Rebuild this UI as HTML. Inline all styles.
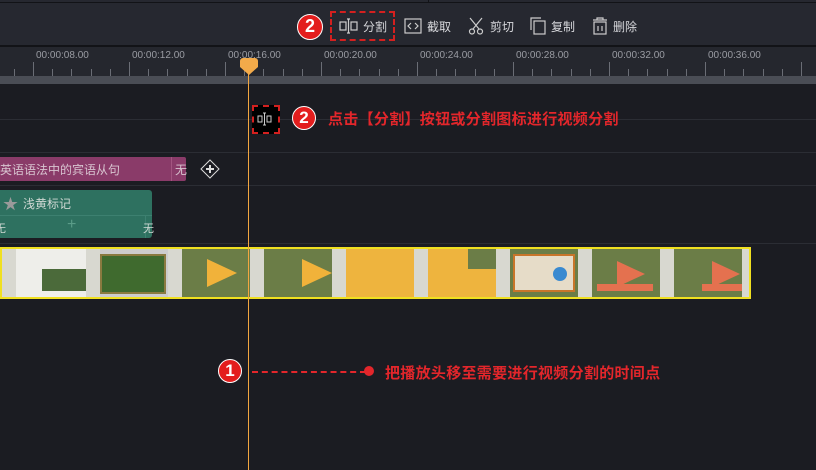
<!DOCTYPE html>
<html><head><meta charset="utf-8"><style>
*{margin:0;padding:0;box-sizing:border-box}
body{width:816px;height:470px;background:#1b1c22;overflow:hidden;position:relative;font-family:"Liberation Sans","Noto Sans CJK SC",sans-serif}
.a{position:absolute}
.lbl{font-size:10px;color:#9a9ca3;top:50px}
.tk{position:absolute;width:1px;background:#6a6d75}
.red{color:#e3262b;font-weight:bold;font-size:15px;letter-spacing:0.3px}
.circ{border-radius:50%;background:#e31d1d;border:1.5px solid #fff;color:#fff;font-weight:bold;text-align:center}
.tb{color:#d6d7db;font-size:12px;top:18px}
</style></head><body>
<div class="a" style="left:0;top:0;width:816px;height:46px;background:#262830"></div>
<div class="a" style="left:0;top:2px;width:816px;height:1px;background:#121317"></div>
<div class="a" style="left:428px;top:0;width:1px;height:3px;background:#121317"></div>
<div class="a" style="left:0;top:45px;width:816px;height:2px;background:#121317"></div>
<div class="a circ" style="left:297px;top:14px;width:26px;height:26px;font-size:18px;line-height:23px">2</div>
<div class="a" style="left:330px;top:11px;width:65px;height:30px;border:2px dashed #d4201f"></div>
<svg class="a" style="left:339px;top:18px" width="20" height="16" viewBox="0 0 20 16" fill="none" stroke="#ccc" stroke-width="1.2"><rect x="1" y="4" width="6" height="8"/><rect x="12" y="4" width="6" height="8"/><path d="M9.5 1v14M8 1h3M8 15h3"/></svg>
<div class="a tb" style="left:363px">分割</div>
<svg class="a" style="left:404px;top:18px" width="18" height="16" viewBox="0 0 18 16" fill="none" stroke="#ccc" stroke-width="1.2"><rect x="1" y="1" width="16" height="14"/><path d="M7 5l-3 3 3 3M11 5l3 3-3 3"/></svg>
<div class="a tb" style="left:427px">截取</div>
<svg class="a" style="left:468px;top:17px" width="16" height="18" viewBox="0 0 16 18" fill="none" stroke="#ccc" stroke-width="1.2"><path d="M2 1l9 11M14 1L5 12"/><circle cx="4" cy="14.5" r="2.5"/><circle cx="12" cy="14.5" r="2.5"/></svg>
<div class="a tb" style="left:490px">剪切</div>
<svg class="a" style="left:530px;top:17px" width="16" height="18" viewBox="0 0 16 18" fill="none" stroke="#ccc" stroke-width="1.2"><path d="M1 13V1h10"/><rect x="4" y="4" width="11" height="13"/></svg>
<div class="a tb" style="left:551px">复制</div>
<svg class="a" style="left:592px;top:17px" width="16" height="18" viewBox="0 0 16 18" fill="none" stroke="#ccc" stroke-width="1.2"><path d="M1 3h14M5 3V1h6v2"/><rect x="2" y="5" width="12" height="12"/><path d="M6 9v5M10 9v5"/></svg>
<div class="a tb" style="left:613px">删除</div>
<div class="a" style="left:0;top:47px;width:816px;height:29px;background:#25272e"></div>
<div class="a" style="left:0;top:76px;width:816px;height:8px;background:#4a4d55"></div>
<div class="a lbl" style="left:36px">00:00:08.00</div>
<div class="a lbl" style="left:132px">00:00:12.00</div>
<div class="a lbl" style="left:228px">00:00:16.00</div>
<div class="a lbl" style="left:324px">00:00:20.00</div>
<div class="a lbl" style="left:420px">00:00:24.00</div>
<div class="a lbl" style="left:516px">00:00:28.00</div>
<div class="a lbl" style="left:612px">00:00:32.00</div>
<div class="a lbl" style="left:708px">00:00:36.00</div>
<div id="ticks"></div>
<script>
var h='';for(var i=-1;i<45;i++){var x=33+i*19.2;if(x<0||x>816)continue;var m=(i%5==0);h+='<div class="tk" style="left:'+Math.round(x)+'px;top:'+(m?62:69)+'px;height:'+(m?14:7)+'px"></div>';}
document.getElementById('ticks').innerHTML=h;
</script>
<div class="a" style="left:0;top:119px;width:816px;height:1px;background:#2b2d34"></div>
<div class="a" style="left:0;top:152px;width:816px;height:1px;background:#2b2d34"></div>
<div class="a" style="left:0;top:185px;width:816px;height:1px;background:#2b2d34"></div>
<div class="a" style="left:0;top:243px;width:816px;height:1px;background:#2b2d34"></div>
<div class="a" style="left:0;top:157px;width:186px;height:24px;background:#8a3b69;border-radius:0 2px 2px 0"></div>
<div class="a" style="left:171px;top:157px;width:1px;height:24px;background:#a35580"></div>
<div class="a" style="left:0;top:161px;font-size:12px;color:#d8c4d0">英语语法中的宾语从句</div>
<div class="a" style="left:175px;top:161px;font-size:12px;color:#d8c4d0">无</div>
<svg class="a" style="left:200px;top:159px" width="20" height="20" viewBox="0 0 20 20" fill="none" stroke="#ddd" stroke-width="1"><path d="M10 1l9 9-9 9-9-9z"/><path d="M10 6v8M6 10h8" stroke-width="2"/></svg>
<div class="a" style="left:0;top:190px;width:152px;height:48px;background:#2e7160;border-radius:0 3px 3px 0"></div>
<div class="a" style="left:0;top:215px;width:152px;height:1px;background:#3d8070"></div>
<div class="a" style="left:145px;top:215px;width:1px;height:23px;background:#3d8070"></div>
<div class="a" style="left:3px;top:193px;font-size:15px;color:#9a9a9a">★</div>
<div class="a" style="left:23px;top:195px;font-size:12px;color:#cfd8d3">浅黄标记</div>
<div class="a" style="left:0;top:220px;font-size:11px;color:#cfd8d3;width:6px;overflow:hidden;direction:rtl">无</div>
<div class="a" style="left:67px;top:216px;font-size:16px;color:#5a9c88">+</div>
<div class="a" style="left:143px;top:220px;font-size:11px;color:#cfd8d3">无</div>
<div class="a" style="left:0;top:247px;width:751px;height:52px;border:2px solid #f0e020;background:#ccc;overflow:hidden">
<div class="a" style="left:0;top:0;width:14px;height:48px;background:#d8d8d0"></div>
<div class="a" style="left:14px;top:0;width:70px;height:48px;background:#eeeeea"></div>
<div class="a" style="left:40px;top:20px;width:44px;height:22px;background:#4b6a3a"></div>
<div class="a" style="left:84px;top:0;width:14px;height:48px;background:#d8d8d0"></div>
<div class="a" style="left:98px;top:5px;width:66px;height:40px;background:#3f6a2e;border:2px solid #8a7a40"></div>
<div class="a" style="left:166px;top:0;width:14px;height:48px;background:#d8d8d0"></div>
<div class="a" style="left:180px;top:0;width:68px;height:48px;background:#6b7d47"></div>
<div class="a" style="left:205px;top:10px;width:30px;height:28px;background:#f1b23a;clip-path:polygon(0 0,100% 50%,0 100%)"></div>
<div class="a" style="left:248px;top:0;width:14px;height:48px;background:#d8d8d0"></div>
<div class="a" style="left:262px;top:0;width:68px;height:48px;background:#6b7d47"></div>
<div class="a" style="left:300px;top:10px;width:30px;height:28px;background:#f1b23a;clip-path:polygon(0 0,100% 50%,0 100%)"></div>
<div class="a" style="left:330px;top:0;width:14px;height:48px;background:#d8d8d0"></div>
<div class="a" style="left:344px;top:0;width:68px;height:48px;background:#eeb43e"></div>
<div class="a" style="left:412px;top:0;width:14px;height:48px;background:#d8d8d0"></div>
<div class="a" style="left:426px;top:0;width:68px;height:48px;background:#eeb43e"></div>
<div class="a" style="left:466px;top:0;width:28px;height:20px;background:#6b7d47"></div>
<div class="a" style="left:494px;top:0;width:14px;height:48px;background:#d8d8d0"></div>
<div class="a" style="left:508px;top:0;width:68px;height:48px;background:#6b7d47"></div>
<div class="a" style="left:511px;top:5px;width:62px;height:38px;background:#e6dcc8;border:2px solid #c8752a"></div>
<div class="a" style="left:551px;top:18px;width:14px;height:14px;border-radius:50%;background:#3a8ad0"></div>
<div class="a" style="left:576px;top:0;width:14px;height:48px;background:#d8d8d0"></div>
<div class="a" style="left:590px;top:0;width:68px;height:48px;background:#6b7d47"></div>
<div class="a" style="left:615px;top:12px;width:28px;height:26px;background:#e4714f;clip-path:polygon(0 0,100% 50%,0 100%)"></div>
<div class="a" style="left:595px;top:35px;width:56px;height:7px;background:#e4714f"></div>
<div class="a" style="left:658px;top:0;width:14px;height:48px;background:#d8d8d0"></div>
<div class="a" style="left:672px;top:0;width:68px;height:48px;background:#6b7d47"></div>
<div class="a" style="left:710px;top:12px;width:28px;height:26px;background:#e4714f;clip-path:polygon(0 0,100% 50%,0 100%)"></div>
<div class="a" style="left:700px;top:35px;width:40px;height:7px;background:#e4714f"></div>
<div class="a" style="left:740px;top:0;width:10px;height:48px;background:#d8d8d0"></div>
</div>
<div class="a" style="left:248px;top:60px;width:1px;height:410px;background:#f2a640"></div>
<svg class="a" style="left:240px;top:58px" width="18" height="17" viewBox="0 0 18 17"><path d="M3 0h12a3 3 0 0 1 3 3v6l-9 8-9-8V3a3 3 0 0 1 3-3z" fill="#f2aa4a"/></svg>
<div class="a" style="left:252px;top:105px;width:28px;height:29px;background:#000;border:2px dashed #d4201f"></div>
<svg class="a" style="left:257px;top:112px" width="16" height="14" viewBox="0 0 16 14" fill="none" stroke="#ccc" stroke-width="1"><rect x="1" y="4" width="4" height="6"/><rect x="10" y="4" width="4" height="6"/><path d="M7.5 1v12M6 1h3M6 13h3"/></svg>
<div class="a circ" style="left:292px;top:106px;width:24px;height:24px;font-size:17px;line-height:21px">2</div>
<div class="a red" style="left:328px;top:108px">点击【分割】按钮或分割图标进行视频分割</div>
<div class="a circ" style="left:218px;top:359px;width:24px;height:24px;font-size:17px;line-height:21px">1</div>
<div class="a" style="left:252px;top:371px;width:114px;border-top:2px dashed #e3262b"></div>
<div class="a" style="left:364px;top:366px;width:10px;height:10px;border-radius:50%;background:#e3262b"></div>
<div class="a red" style="left:385px;top:362px">把播放头移至需要进行视频分割的时间点</div>
</body></html>
